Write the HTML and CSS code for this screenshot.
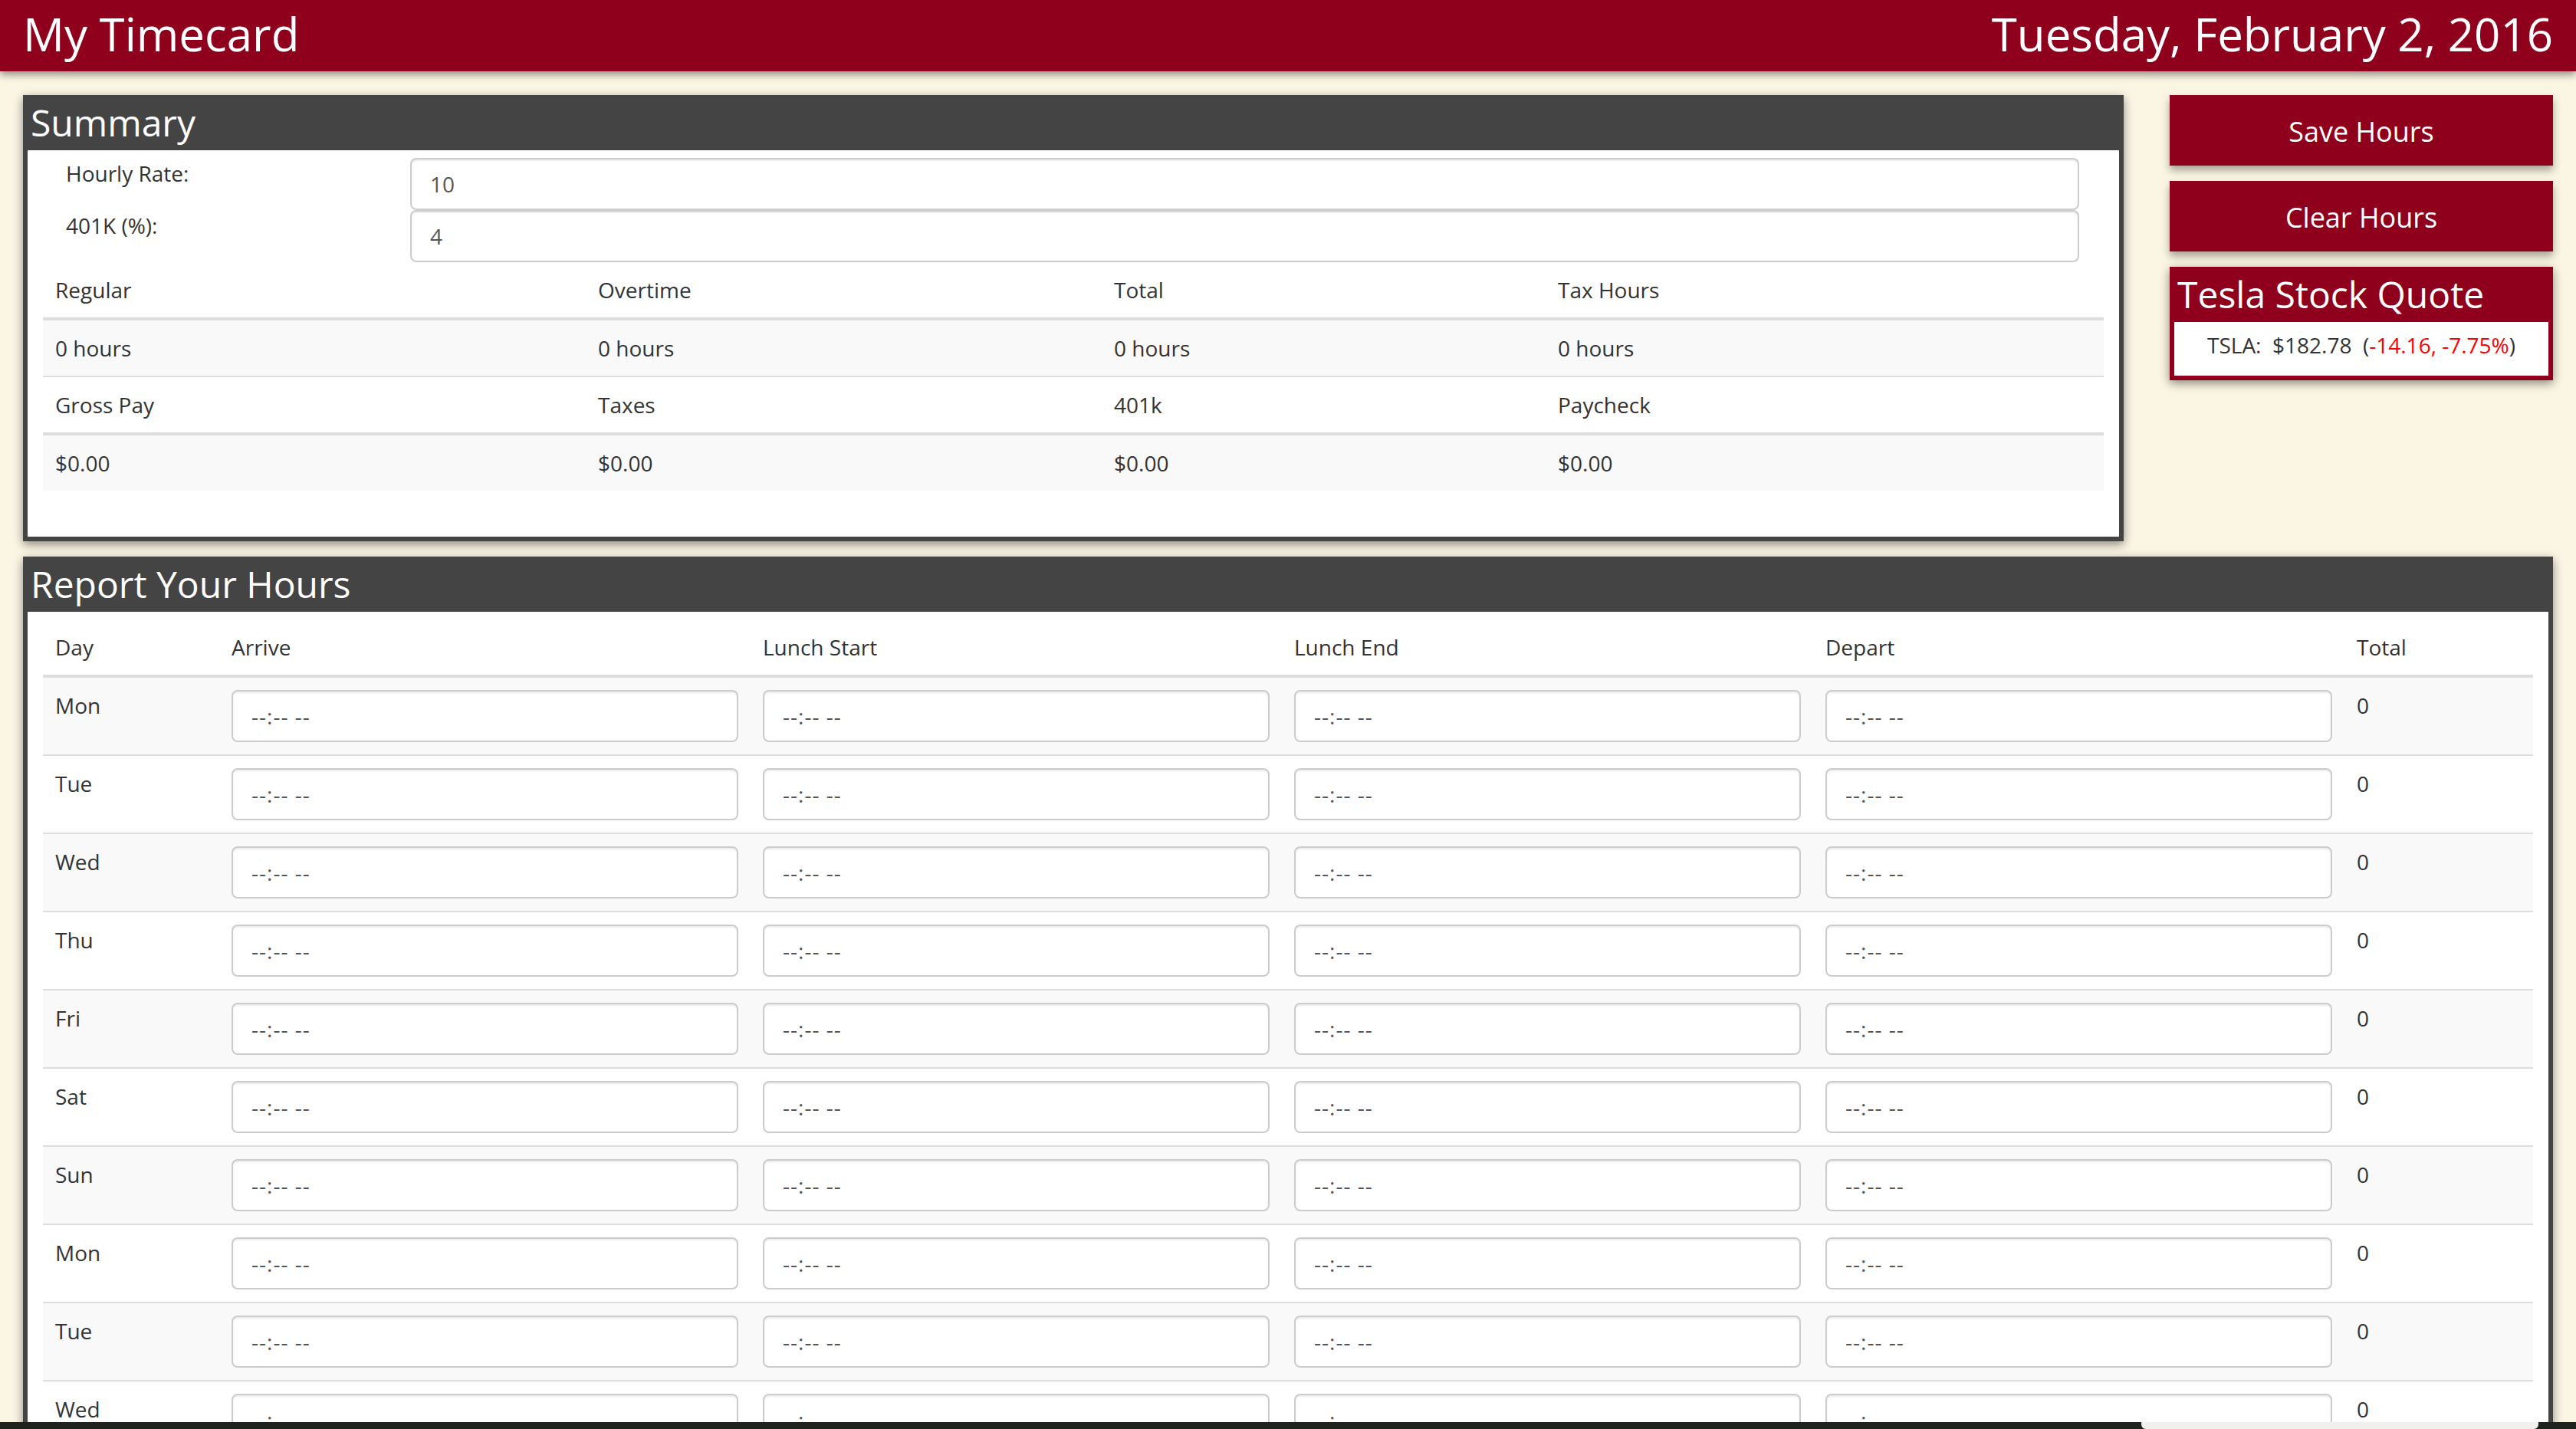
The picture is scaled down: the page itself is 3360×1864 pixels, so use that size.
FILE: index.html
```html
<!DOCTYPE html>
<html lang="en">
<head>
<meta charset="utf-8">
<title>My Timecard</title>
<link rel="stylesheet" href="styles.css">
</head>
<body>
<header class="topbar">
  <h1 class="brand">My Timecard</h1>
  <div class="date">Tuesday, February 2, 2016</div>
</header>

<main class="page">
  <div class="top-row">
    <section class="panel summary">
      <h3 class="panel-title">Summary</h3>
      <div class="panel-body">
        <form class="rate-form">
          <label class="rate-label">Hourly Rate:</label>
          <input class="form-control" type="text" value="10">
          <label class="rate-label">401K (%):</label>
          <input class="form-control" type="text" value="4">
        </form>
        <table class="table summary-table">
          <colgroup>
            <col class="s-c1"><col class="s-c2"><col class="s-c3"><col class="s-c4">
          </colgroup>
          <tr class="head-row"><td>Regular</td><td>Overtime</td><td>Total</td><td>Tax Hours</td></tr>
          <tr class="striped"><td>0 hours</td><td>0 hours</td><td>0 hours</td><td>0 hours</td></tr>
          <tr class="head-row mid"><td>Gross Pay</td><td>Taxes</td><td>401k</td><td>Paycheck</td></tr>
          <tr class="striped"><td>$0.00</td><td>$0.00</td><td>$0.00</td><td>$0.00</td></tr>
        </table>
      </div>
    </section>

    <aside class="side">
      <button class="btn" type="button">Save Hours</button>
      <button class="btn" type="button">Clear Hours</button>
      <section class="panel stock">
        <h3 class="panel-title">Tesla Stock Quote</h3>
        <div class="panel-body stock-body">TSLA:&nbsp; $182.78&nbsp; (<span class="neg">-14.16, -7.75%</span>)</div>
      </section>
    </aside>
  </div>

  <section class="panel hours">
    <h3 class="panel-title">Report Your Hours</h3>
    <div class="panel-body">
      <table class="table hours-table">
        <colgroup>
          <col class="h-day"><col class="h-time"><col class="h-time"><col class="h-time"><col class="h-time"><col class="h-total">
        </colgroup>
        <thead>
          <tr><th>Day</th><th>Arrive</th><th>Lunch Start</th><th>Lunch End</th><th>Depart</th><th>Total</th></tr>
        </thead>
        <tbody>
          <tr><td>Mon</td><td><input class="form-control time" type="text" placeholder="--:-- --"></td><td><input class="form-control time" type="text" placeholder="--:-- --"></td><td><input class="form-control time" type="text" placeholder="--:-- --"></td><td><input class="form-control time" type="text" placeholder="--:-- --"></td><td>0</td></tr>
          <tr><td>Tue</td><td><input class="form-control time" type="text" placeholder="--:-- --"></td><td><input class="form-control time" type="text" placeholder="--:-- --"></td><td><input class="form-control time" type="text" placeholder="--:-- --"></td><td><input class="form-control time" type="text" placeholder="--:-- --"></td><td>0</td></tr>
          <tr><td>Wed</td><td><input class="form-control time" type="text" placeholder="--:-- --"></td><td><input class="form-control time" type="text" placeholder="--:-- --"></td><td><input class="form-control time" type="text" placeholder="--:-- --"></td><td><input class="form-control time" type="text" placeholder="--:-- --"></td><td>0</td></tr>
          <tr><td>Thu</td><td><input class="form-control time" type="text" placeholder="--:-- --"></td><td><input class="form-control time" type="text" placeholder="--:-- --"></td><td><input class="form-control time" type="text" placeholder="--:-- --"></td><td><input class="form-control time" type="text" placeholder="--:-- --"></td><td>0</td></tr>
          <tr><td>Fri</td><td><input class="form-control time" type="text" placeholder="--:-- --"></td><td><input class="form-control time" type="text" placeholder="--:-- --"></td><td><input class="form-control time" type="text" placeholder="--:-- --"></td><td><input class="form-control time" type="text" placeholder="--:-- --"></td><td>0</td></tr>
          <tr><td>Sat</td><td><input class="form-control time" type="text" placeholder="--:-- --"></td><td><input class="form-control time" type="text" placeholder="--:-- --"></td><td><input class="form-control time" type="text" placeholder="--:-- --"></td><td><input class="form-control time" type="text" placeholder="--:-- --"></td><td>0</td></tr>
          <tr><td>Sun</td><td><input class="form-control time" type="text" placeholder="--:-- --"></td><td><input class="form-control time" type="text" placeholder="--:-- --"></td><td><input class="form-control time" type="text" placeholder="--:-- --"></td><td><input class="form-control time" type="text" placeholder="--:-- --"></td><td>0</td></tr>
          <tr><td>Mon</td><td><input class="form-control time" type="text" placeholder="--:-- --"></td><td><input class="form-control time" type="text" placeholder="--:-- --"></td><td><input class="form-control time" type="text" placeholder="--:-- --"></td><td><input class="form-control time" type="text" placeholder="--:-- --"></td><td>0</td></tr>
          <tr><td>Tue</td><td><input class="form-control time" type="text" placeholder="--:-- --"></td><td><input class="form-control time" type="text" placeholder="--:-- --"></td><td><input class="form-control time" type="text" placeholder="--:-- --"></td><td><input class="form-control time" type="text" placeholder="--:-- --"></td><td>0</td></tr>
          <tr><td>Wed</td><td><input class="form-control time" type="text" placeholder="--:-- --"></td><td><input class="form-control time" type="text" placeholder="--:-- --"></td><td><input class="form-control time" type="text" placeholder="--:-- --"></td><td><input class="form-control time" type="text" placeholder="--:-- --"></td><td>0</td></tr>
          <tr><td>Thu</td><td><input class="form-control time" type="text" placeholder="--:-- --"></td><td><input class="form-control time" type="text" placeholder="--:-- --"></td><td><input class="form-control time" type="text" placeholder="--:-- --"></td><td><input class="form-control time" type="text" placeholder="--:-- --"></td><td>0</td></tr>
          <tr><td>Fri</td><td><input class="form-control time" type="text" placeholder="--:-- --"></td><td><input class="form-control time" type="text" placeholder="--:-- --"></td><td><input class="form-control time" type="text" placeholder="--:-- --"></td><td><input class="form-control time" type="text" placeholder="--:-- --"></td><td>0</td></tr>
        </tbody>
      </table>
    </div>
  </section>
</main>

<div class="screen-edge"><div class="screen-tab"></div></div>
</body>
</html>
```

FILE: styles.css
```css
* { box-sizing: border-box; }

html, body {
  margin: 0;
  padding: 0;
}

body {
  background: #fbf5e3;
  font-family: "Open Sans", "Noto Sans", sans-serif;
  font-size: 28px;
  line-height: 40px;
  color: #333;
  overflow: hidden;
}

/* Top bar */
.topbar {
  position: relative;
  z-index: 2;
  height: 93px;
  padding: 0 30px;
  display: flex;
  justify-content: space-between;
  align-items: flex-start;
  background: #8e001c;
  color: #fff;
  box-shadow: 0 4px 10px rgba(0, 0, 0, 0.45);
}

.brand,
.date {
  margin: 0;
  padding-top: 14px;
  font-size: 60px;
  line-height: 60px;
  font-weight: 400;
}

/* Page */
.page {
  padding: 31px 30px 0;
}

.top-row {
  display: flex;
  gap: 60px;
  align-items: flex-start;
}

/* Panels */
.panel {
  background: #444;
  padding: 0 6px 6px;
  box-shadow: 0 4px 12px rgba(0, 0, 0, 0.45);
}

.summary {
  flex: 1;
}

.panel-title {
  margin: 0;
  height: 72px;
  padding: 10px 0 0 4px;
  font-size: 48px;
  line-height: 52.8px;
  font-weight: 400;
  color: #fff;
  white-space: nowrap;
}

.panel-body {
  background: #fff;
  padding: 10px 20px 20px;
}

/* Summary form */
.rate-form {
  display: grid;
  grid-template-columns: 479px 1fr;
  padding-right: 32px;
}

.rate-label {
  padding-left: 30px;
  line-height: 40px;
}

.form-control {
  display: block;
  width: 100%;
  height: 68px;
  padding: 12px 24px;
  font-family: inherit;
  font-size: 28px;
  line-height: 40px;
  color: #555;
  background: #fff;
  border: 2px solid #ccc;
  border-radius: 8px;
  box-shadow: inset 0 2px 2px rgba(0, 0, 0, 0.075);
  outline: none;
}

.form-control.time {
  letter-spacing: 1px;
}

.form-control.time::placeholder {
  color: #555;
  opacity: 1;
}

/* Tables */
.table {
  width: 100%;
  border-collapse: separate;
  border-spacing: 0;
  table-layout: fixed;
}

.table td,
.table th {
  padding: 16px;
  text-align: left;
  vertical-align: top;
  font-weight: 400;
  line-height: 40px;
}

.summary-table {
  margin-bottom: 40px;
}

.s-c1 { width: 708px; }
.s-c2 { width: 673px; }
.s-c3 { width: 579px; }

.summary-table .head-row td {
  border-bottom: 4px solid #ddd;
}

.summary-table .head-row.mid td {
  border-top: 2px solid #ddd;
}

.striped td {
  background: #f9f9f9;
}

/* Right column */
.side {
  width: 500px;
  display: flex;
  flex-direction: column;
  gap: 20px;
}

.btn {
  height: 92px;
  border: 0;
  padding: 3px 0 0;
  background: #8e001c;
  color: #fff;
  font-family: inherit;
  font-size: 36px;
  line-height: 50px;
  box-shadow: 0 6px 10px rgba(0, 0, 0, 0.35);
  cursor: pointer;
}

.panel.stock {
  background: #8e001c;
}

.stock-body {
  padding: 10px 10px 20px;
  text-align: center;
  white-space: nowrap;
}

.neg {
  color: #f00;
}

/* Hours */
.hours {
  margin-top: 20px;
}

.h-day { width: 230px; }
.h-time { width: 693px; }

.hours-table thead th {
  border-bottom: 4px solid #ddd;
}

.hours-table tbody tr + tr td {
  border-top: 2px solid #ddd;
}

.hours-table tbody tr:nth-child(odd) td {
  background: #f9f9f9;
}

/* Screen bottom edge */
.screen-edge {
  position: fixed;
  left: 0;
  right: 0;
  bottom: 0;
  height: 9px;
  background: #1f231d;
  z-index: 10;
}

.screen-tab {
  position: absolute;
  left: 2793px;
  width: 518px;
  top: 0;
  bottom: 0;
  background: #f1f0ec;
  border-radius: 0 0 6px 6px;
}
```
